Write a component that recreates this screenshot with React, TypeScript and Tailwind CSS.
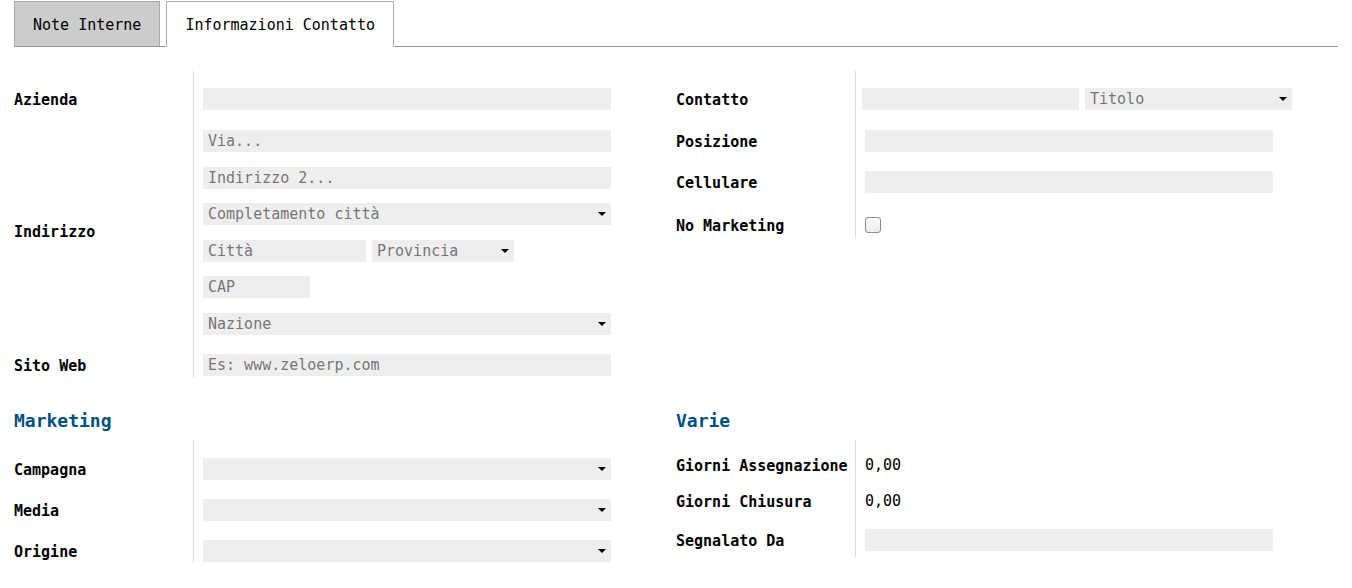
import React from 'react';

const mono = { fontFamily: '"DejaVu Sans Mono", "Liberation Mono", monospace' };

function Caret() {
  return (
    <span className="absolute right-[5px] top-1/2 -translate-y-1/2 w-0 h-0 border-l-[4px] border-r-[4px] border-t-[4px] border-l-transparent border-r-transparent border-t-black" />
  );
}

function Input({ placeholder, width = 'w-[408px]', select = false, className = '' }: { placeholder?: string; width?: string; select?: boolean; className?: string }) {
  return (
    <div className={`relative h-[22px] bg-[#eeeeee] pl-[5px] text-[15px] leading-[22px] text-[#777777] ${width} ${className}`}>
      {placeholder}
      {select && <Caret />}
    </div>
  );
}

function Row({ label, pt, pb = 0, children, center = false }: { label?: string; pt: number; pb?: number; children: React.ReactNode; center?: boolean }) {
  return (
    <div className="grid grid-cols-[179px_1fr]">
      <div
        className={`relative top-px font-bold text-[15px] leading-[22px] text-black ${center ? 'flex items-center' : ''}`}
        style={center ? undefined : { paddingTop: pt }}
      >
        {label}
      </div>
      <div className="border-l border-[#dddddd] pl-[9px]" style={{ paddingTop: pt, paddingBottom: pb }}>
        {children}
      </div>
    </div>
  );
}

function Heading({ children }: { children: React.ReactNode }) {
  return <div className="mt-[31px] mb-[7px] text-[18px] leading-[24px] font-bold text-[#00507f]">{children}</div>;
}

export default function App() {
  return (
    <div className="bg-white min-h-[588px] px-[14px] pt-[1px]" style={mono}>
      <div className="w-[1324px]">
        {/* tabs */}
        <div className="flex gap-[6px] border-b border-[#999999]">
          <div className="border border-b-0 border-[#aaaaaa] bg-[#cccccc] px-[18px] pt-[12px] pb-[10px] text-[15px] leading-[22px] text-black">
            Note Interne
          </div>
          <div className="-mb-px border border-b-0 border-[#aaaaaa] bg-white px-[18px] pt-[12px] pb-[11px] text-[15px] leading-[22px] text-black">
            Informazioni Contatto
          </div>
        </div>

        <div className="mt-[24px] grid grid-cols-[662px_1fr] items-start">
          {/* left top */}
          <div>
            <Row label="Azienda" pt={17} pb={10}>
              <Input />
            </Row>
            <Row label="Indirizzo" pt={10} pb={7} center>
              <div className="flex flex-col gap-[14.6px]">
                <Input placeholder="Via..." />
                <Input placeholder="Indirizzo 2..." />
                <Input placeholder="Completamento città" select />
                <div className="flex gap-[6px]">
                  <Input placeholder="Città" width="w-[163px]" />
                  <Input placeholder="Provincia" width="w-[142px]" select />
                </div>
                <Input placeholder="CAP" width="w-[107px]" />
                <Input placeholder="Nazione" select />
              </div>
            </Row>
            <Row label="Sito Web" pt={12} pb={2}>
              <Input placeholder="Es: www.zeloerp.com" />
            </Row>
          </div>

          {/* right top */}
          <div>
            <Row label="Contatto" pt={17}>
              <div className="flex gap-[6px] -ml-[3px]">
                <Input width="w-[217px]" />
                <Input placeholder="Titolo" width="w-[207px]" select />
              </div>
            </Row>
            <Row label="Posizione" pt={20}>
              <Input />
            </Row>
            <Row label="Cellulare" pt={19}>
              <Input />
            </Row>
            <Row label="No Marketing" pt={21} pb={3}>
              <div className="h-[22px] flex items-center">
                <div className="w-[16px] h-[16px] rounded-[3px] border border-[#8a8a8a] bg-gradient-to-b from-[#fcfcfc] to-[#ececec]" />
              </div>
            </Row>
          </div>

          <Heading>Marketing</Heading>
          <Heading>Varie</Heading>

          {/* left bottom */}
          <div>
            <Row label="Campagna" pt={18}>
              <Input select />
            </Row>
            <Row label="Media" pt={19}>
              <Input select />
            </Row>
            <Row label="Origine" pt={19} pb={1}>
              <Input select />
            </Row>
          </div>

          {/* right bottom */}
          <div>
            <Row label="Giorni Assegnazione" pt={14}>
              <div className="text-[15px] leading-[22px] text-black">0,00</div>
            </Row>
            <Row label="Giorni Chiusura" pt={14}>
              <div className="text-[15px] leading-[22px] text-black">0,00</div>
            </Row>
            <Row label="Segnalato Da" pt={17} pb={6}>
              <Input />
            </Row>
          </div>
        </div>
      </div>
    </div>
  );
}
